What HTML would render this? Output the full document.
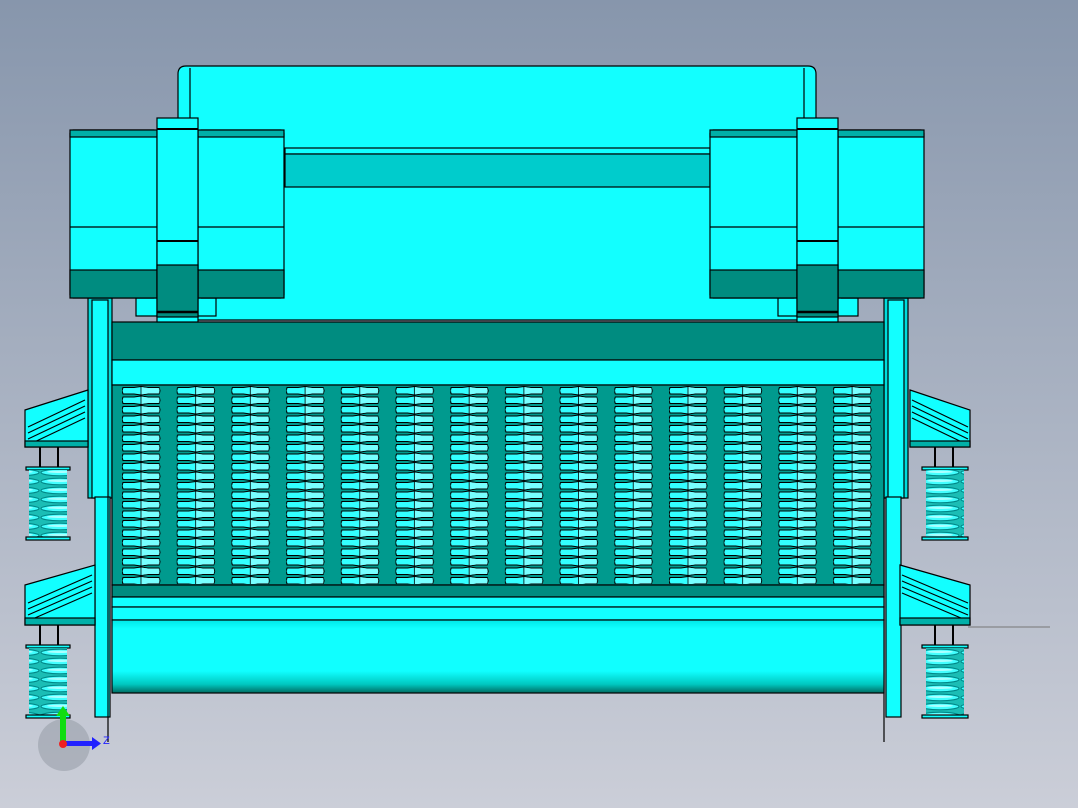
<!DOCTYPE html>
<html><head><meta charset="utf-8"><style>
html,body{margin:0;padding:0;width:1078px;height:808px;overflow:hidden}
svg{display:block}
</style></head><body>
<svg width="1078" height="808" viewBox="0 0 1078 808" xmlns="http://www.w3.org/2000/svg" stroke="#000" stroke-width="1.2">
<defs>
<linearGradient id="bg" x1="0" y1="0" x2="0" y2="1">
<stop offset="0" stop-color="#8796ac"/><stop offset="1" stop-color="#cbced8"/></linearGradient>
<linearGradient id="cyl" x1="0" y1="0" x2="0" y2="1">
<stop offset="0" stop-color="#00e8e8"/><stop offset="0.12" stop-color="#10ffff"/><stop offset="0.7" stop-color="#10ffff"/><stop offset="0.88" stop-color="#00c8c0"/><stop offset="1" stop-color="#006a60"/></linearGradient>
<pattern id="slots" x="122" y="386" width="54.7" height="9.5" patternUnits="userSpaceOnUse">
<path d="M1,1.5 L12,1.5 L19,0.5 L26,1.5 L37,1.5 L38,4.7 L37,8 L26,8 L19,9 L12,8 L1,8 L0,4.7 Z" fill="#3ff" stroke="#000" stroke-width="1.1"/>
<path d="M19,1 L26,2 L37,2 L37.5,4.7 L37,7.5 L26,7.5 L19,8.5 Z" fill="#7ff" stroke="none"/>
<line x1="19" y1="0" x2="19" y2="9.5" stroke-width="0.8"/>
</pattern>
<pattern id="spr" x="0" y="0" width="40" height="9" patternUnits="userSpaceOnUse">
<rect width="40" height="9" fill="#1bbdb5" stroke="none"/>
<ellipse cx="20" cy="4.5" rx="19" ry="3.3" fill="#4ff" stroke="#088" stroke-width="1.2"/>
<ellipse cx="20" cy="3.8" rx="13" ry="1.2" fill="#aff" stroke="none"/>
</pattern>
</defs>
<rect width="1078" height="808" fill="url(#bg)" stroke="none"/>
<line x1="678" y1="128" x2="760" y2="128" stroke="#777" stroke-width="1"/>
<line x1="968" y1="627" x2="1050" y2="627" stroke="#777" stroke-width="1"/>

<path d="M178,320 L178,74 Q178,66 186,66 L808,66 Q816,66 816,74 L816,320 Z" fill="#12ffff"/>
<line x1="190" y1="68" x2="190" y2="120" stroke="#000"/>
<line x1="804" y1="68" x2="804" y2="120" stroke="#000"/>
<rect x="285" y="148" width="425" height="6" fill="#12ffff"/>
<rect x="285" y="154" width="425" height="33" fill="#00cccc"/>

<rect x="88" y="298" width="24" height="200" fill="#00dcdc"/>
<rect x="92" y="300" width="16" height="198" fill="#12ffff"/>
<rect x="95" y="497" width="15" height="220" fill="#12ffff"/>
<line x1="108" y1="497" x2="108" y2="742"/>
<rect x="884" y="298" width="24" height="200" fill="#00dcdc"/>
<rect x="888" y="300" width="16" height="198" fill="#12ffff"/>
<rect x="886" y="497" width="15" height="220" fill="#12ffff"/>
<line x1="884" y1="497" x2="884" y2="742"/>

<g fill="#12ffff">
<path d="M25,410 L25,447 L88,447 L88,390 Z"/>
<path d="M28,427 L85,400 M28,433 L85,406 M28,439 L85,412 M28,445 L85,418" fill="none"/>
<rect x="25" y="441" width="63" height="6" fill="#00b0a8"/>
<path d="M25,585 L25,625 L95,625 L95,565 Z"/>
<path d="M28,603 L92,575 M28,609 L92,581 M28,615 L92,587 M28,621 L92,593" fill="none"/>
<rect x="25" y="618" width="70" height="7" fill="#00b0a8"/>
<path d="M910,390 L970,410 L970,447 L910,447 Z"/>
<path d="M912,400 L968,427 M912,406 L968,433 M912,412 L968,439 M912,418 L968,445" fill="none"/>
<rect x="910" y="441" width="60" height="6" fill="#00b0a8"/>
<path d="M900,565 L970,585 L970,625 L900,625 Z"/>
<path d="M902,575 L968,603 M902,581 L968,609 M902,587 L968,615 M902,593 L968,621" fill="none"/>
<rect x="900" y="618" width="70" height="7" fill="#00b0a8"/>
</g>
<g>
<line x1="40" y1="447" x2="40" y2="467" stroke-width="2"/><line x1="58" y1="447" x2="58" y2="467" stroke-width="2"/>
<rect x="26" y="467" width="44" height="3" fill="#12ffff"/>
<rect x="29" y="470" width="38" height="67" fill="url(#spr)" stroke="none"/>
<rect x="26" y="537" width="44" height="3" fill="#12ffff"/>
<line x1="40" y1="625" x2="40" y2="645" stroke-width="2"/><line x1="58" y1="625" x2="58" y2="645" stroke-width="2"/>
<rect x="26" y="645" width="44" height="3" fill="#12ffff"/>
<rect x="29" y="648" width="38" height="67" fill="url(#spr)" stroke="none"/>
<rect x="26" y="715" width="44" height="3" fill="#12ffff"/>
<line x1="935" y1="447" x2="935" y2="467" stroke-width="2"/><line x1="953" y1="447" x2="953" y2="467" stroke-width="2"/>
<rect x="922" y="467" width="46" height="3" fill="#12ffff"/>
<rect x="926" y="470" width="38" height="67" fill="url(#spr)" stroke="none"/>
<rect x="922" y="537" width="46" height="3" fill="#12ffff"/>
<line x1="935" y1="625" x2="935" y2="645" stroke-width="2"/><line x1="953" y1="625" x2="953" y2="645" stroke-width="2"/>
<rect x="922" y="645" width="46" height="3" fill="#12ffff"/>
<rect x="926" y="648" width="38" height="67" fill="url(#spr)" stroke="none"/>
<rect x="922" y="715" width="46" height="3" fill="#12ffff"/>
</g>

<rect x="112" y="322" width="772" height="38" fill="#008c80"/>
<rect x="112" y="360" width="772" height="25" fill="#12ffff"/>
<rect x="112" y="385" width="772" height="200" fill="#009a8e"/>
<rect x="122" y="386" width="758" height="198" fill="url(#slots)" stroke="none"/>
<rect x="112" y="585" width="772" height="12" fill="#008c80"/>
<rect x="112" y="597" width="772" height="10" fill="#12ffff"/>
<rect x="112" y="607" width="772" height="13" fill="#12ffff"/>
<rect x="112" y="620" width="772" height="73" fill="url(#cyl)"/>

<g>
<rect x="136" y="298" width="80" height="18" fill="#12ffff"/>
<rect x="70" y="130" width="87" height="168" rx="3" fill="#12ffff"/>
<rect x="70" y="130" width="87" height="7" fill="#00b0a8"/>
<rect x="70" y="270" width="87" height="28" fill="#008c80"/>
<line x1="70" y1="227" x2="157" y2="227"/>
<rect x="198" y="130" width="86" height="168" rx="3" fill="#12ffff"/>
<rect x="198" y="130" width="86" height="7" fill="#00b0a8"/>
<rect x="198" y="270" width="86" height="28" fill="#008c80"/>
<line x1="198" y1="227" x2="284" y2="227"/>
<rect x="157" y="118" width="41" height="204" fill="#12ffff"/>
<line x1="157" y1="129" x2="198" y2="129" stroke-width="2"/>
<line x1="157" y1="241" x2="198" y2="241" stroke-width="2"/>
<rect x="157" y="265" width="41" height="52" fill="#008c80"/>
<line x1="157" y1="312" x2="198" y2="312" stroke-width="2.5"/>
</g>
<g>
<rect x="778" y="298" width="80" height="18" fill="#12ffff"/>
<rect x="710" y="130" width="87" height="168" rx="3" fill="#12ffff"/>
<rect x="710" y="130" width="87" height="7" fill="#00b0a8"/>
<rect x="710" y="270" width="87" height="28" fill="#008c80"/>
<line x1="710" y1="227" x2="797" y2="227"/>
<rect x="838" y="130" width="86" height="168" rx="3" fill="#12ffff"/>
<rect x="838" y="130" width="86" height="7" fill="#00b0a8"/>
<rect x="838" y="270" width="86" height="28" fill="#008c80"/>
<line x1="838" y1="227" x2="924" y2="227"/>
<rect x="797" y="118" width="41" height="204" fill="#12ffff"/>
<line x1="797" y1="129" x2="838" y2="129" stroke-width="2"/>
<line x1="797" y1="241" x2="838" y2="241" stroke-width="2"/>
<rect x="797" y="265" width="41" height="52" fill="#008c80"/>
<line x1="797" y1="312" x2="838" y2="312" stroke-width="2.5"/>
</g>

<circle cx="64" cy="745" r="26" fill="#9aa0aa" stroke="none" opacity="0.6"/>
<rect x="60" y="712" width="6" height="32" fill="#1d1" stroke="none"/>
<path d="M56,716 L63,706 L70,716 Z" fill="#1d1" stroke="none"/>
<rect x="64" y="741" width="30" height="5" fill="#22f" stroke="none"/>
<path d="M92,737 L101,743.5 L92,750 Z" fill="#22f" stroke="none"/>
<circle cx="63" cy="744" r="4" fill="#e22" stroke="none"/>
<text x="103" y="744" font-family="Liberation Sans, sans-serif" font-size="11" fill="#22f" stroke="none">Z</text>
</svg>
</body></html>
